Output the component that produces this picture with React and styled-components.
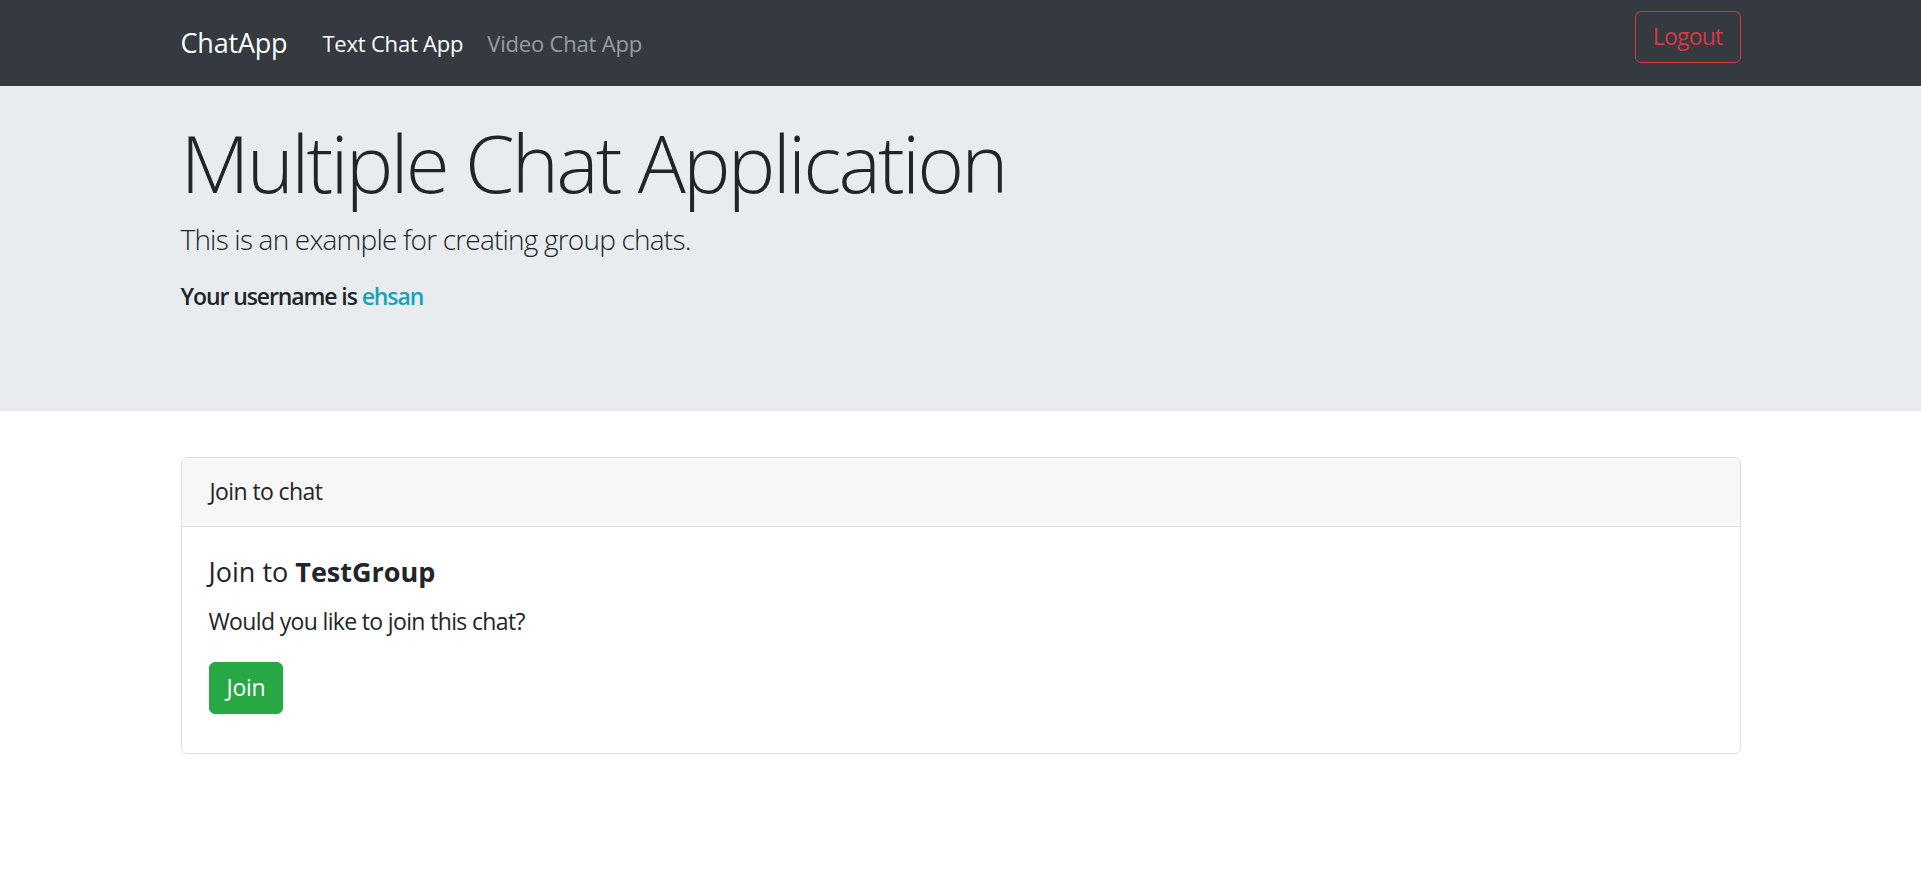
import React from "react";
import styled, { createGlobalStyle } from "styled-components";

const GlobalStyle = createGlobalStyle`
  html, body {
    margin: 0;
    padding: 0;
    background: #fff;
  }
  body {
    font-family: "Open Sans", "Noto Sans", "Liberation Sans", sans-serif;
    color: #212529;
    -webkit-font-smoothing: antialiased;
  }
  * { box-sizing: border-box; }
`;

const NavBar = styled.nav`
  background: #343a40;
  height: 86px;
`;

const Container = styled.div`
  width: 1560px;
  margin: 0 auto;
`;

const NavInner = styled(Container)`
  height: 100%;
  display: flex;
  align-items: center;
`;

const Brand = styled.a`
  font-size: 27px;
  line-height: 39px;
  letter-spacing: -0.2px;
  color: #fff;
  text-decoration: none;
  margin-right: 23px;
  margin-top: -1px;
`;

const NavLinks = styled.div`
  display: flex;
  align-items: center;
  flex: 1;
`;

const NavLink = styled.a`
  font-size: 22px;
  line-height: 33px;
  letter-spacing: -0.2px;
  padding: 0 12px;
  text-decoration: none;
  color: ${(p) => (p.$active ? "#fff" : "rgba(255,255,255,0.5)")};
`;

const Button = styled.button`
  font-family: inherit;
  font-size: 23px;
  line-height: 36px;
  letter-spacing: ${(p) => p.$spacing || "-0.3px"};
  padding: 6px 17px 8px;
  border-radius: 6px;
  cursor: pointer;
  border: 1px solid ${(p) => p.$color};
  background: ${(p) => (p.$outline ? "transparent" : p.$color)};
  color: ${(p) => (p.$outline ? p.$color : "#fff")};
`;

const LogoutButton = styled(Button)`
  align-self: flex-start;
  margin-top: 11px;
`;

const Jumbotron = styled.header`
  background: #e9ecef;
  padding: 26px 0 97px;
`;

const Display = styled.h1`
  margin: 0 0 6px;
  font-size: 80px;
  line-height: 100px;
  font-weight: 300;
  letter-spacing: -2.8px;
`;

const Lead = styled.p`
  margin: 0 0 18px;
  font-size: 28px;
  line-height: 42px;
  font-weight: 300;
  letter-spacing: -0.8px;
`;

const UserLine = styled.h5`
  margin: 0;
  font-size: 23px;
  line-height: 36px;
  font-weight: 600;
  letter-spacing: -1.1px;
`;

const Username = styled.span`
  color: #17a2b8;
`;

const Card = styled.section`
  margin-top: 46px;
  border: 1px solid #dfdfdf;
  border-radius: 6px;
  overflow: hidden;
  background: #fff;
`;

const CardHeader = styled.div`
  background: #f7f7f7;
  border-bottom: 1px solid #dfdfdf;
  padding: 15px 28px 17px;
  font-size: 23px;
  line-height: 36px;
  letter-spacing: -0.6px;
`;

const CardBody = styled.div`
  padding: 29px 27px 39px;
`;

const CardTitle = styled.h5`
  margin: 0 0 15px;
  font-size: 27px;
  line-height: 32px;
  font-weight: 500;
`;

const CardText = styled.p`
  margin: 0 0 23px;
  font-size: 23px;
  line-height: 36px;
  letter-spacing: -0.65px;
`;

export default function App() {
  return (
    <>
      <GlobalStyle />
      <NavBar>
        <NavInner>
          <Brand href="#">ChatApp</Brand>
          <NavLinks>
            <NavLink $active href="#">Text Chat App</NavLink>
            <NavLink href="#">Video Chat App</NavLink>
          </NavLinks>
          <LogoutButton $outline $color="#dc3545" $spacing="-0.8px">
            Logout
          </LogoutButton>
        </NavInner>
      </NavBar>
      <Jumbotron>
        <Container>
          <Display>Multiple Chat Application</Display>
          <Lead>This is an example for creating group chats.</Lead>
          <UserLine>
            Your username is <Username>ehsan</Username>
          </UserLine>
        </Container>
      </Jumbotron>
      <Container>
        <Card>
          <CardHeader>Join to chat</CardHeader>
          <CardBody>
            <CardTitle>
              Join to <b>TestGroup</b>
            </CardTitle>
            <CardText>Would you like to join this chat?</CardText>
            <Button $color="#28a745">Join</Button>
          </CardBody>
        </Card>
      </Container>
    </>
  );
}
